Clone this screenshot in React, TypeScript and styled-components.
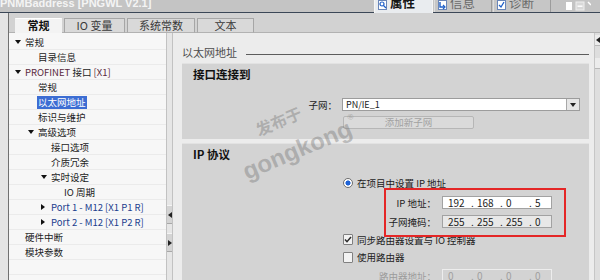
import React from "react";
import styled, { createGlobalStyle } from "styled-components";

const GlobalStyle = createGlobalStyle`
  html, body { margin: 0; padding: 0; }
  body {
    width: 600px;
    height: 280px;
    overflow: hidden;
    background: #ececec;
    font-family: "Noto Sans CJK SC", "Liberation Sans", sans-serif;
    font-size: 9.5px;
    color: #1c1c1c;
  }
`;

const Screen = styled.div`
  position: relative;
  width: 600px;
  height: 280px;
  display: flex;
  flex-direction: column;
  overflow: hidden;
`;

/* ---------- title bar ---------- */

const TitleBar = styled.div`
  height: 12px;
  flex: none;
  display: flex;
  align-items: flex-start;
  background: #c4c4c4;
  border-bottom: 1px solid #3b4757;
`;

const TitleText = styled.span`
  margin-top: -3px;
  font-family: "Liberation Sans", sans-serif;
  font-weight: 700;
  font-size: 11px;
  line-height: 12px;
  color: #f4f4f4;
  white-space: nowrap;
`;

const TitleRight = styled.div`
  margin-left: auto;
  display: flex;
  align-items: flex-start;
  align-self: stretch;
  padding-right: 9px;
`;

const TopTabs = styled.div`
  display: flex;
  gap: 1px;
  align-self: stretch;
`;

const TopTab = styled.div<{ $active?: boolean; $w: number }>`
  position: relative;
  width: ${(p) => p.$w}px;
  box-sizing: border-box;
  display: flex;
  align-items: flex-start;
  gap: 3px;
  padding-left: 3px;
  overflow: hidden;
  font-size: 12.5px;
  line-height: 12px;
  white-space: nowrap;
  background: ${(p) => (p.$active ? "#e9ecef" : "#c6c6c6")};
  color: ${(p) => (p.$active ? "#151515" : "#6a6a6a")};
  font-weight: ${(p) => (p.$active ? 700 : 400)};
  border-left: 1px solid ${(p) => (p.$active ? "#f6f6f6" : "#dedede")};
  border-right: 1px solid ${(p) => (p.$active ? "#f6f6f6" : "#9c9c9c")};
  margin-bottom: ${(p) => (p.$active ? "-1px" : "0")};
  span {
    margin-top: -3px;
  }
`;

const WinControls = styled.div`
  margin-left: 14px;
  width: 26px;
  height: 10px;
`;

/* ---------- frame ---------- */

const Frame = styled.div`
  flex: 1;
  min-height: 0;
  display: flex;
`;

const LeftStrip = styled.div`
  width: 8px;
  flex: none;
  background: #e4e4e4;
  border-right: 1px solid #707070;
`;

const Window = styled.div`
  flex: 1;
  min-width: 0;
  display: flex;
  flex-direction: column;
`;

const TabBand = styled.div`
  height: 19px;
  flex: none;
  display: flex;
  align-items: flex-end;
  gap: 2px;
  padding-left: 6px;
  background: #d2d2d2;
  border-bottom: 1px solid #b2b2b2;
`;

const PageTab = styled.div<{ $active?: boolean; $w: number }>`
  position: relative;
  width: ${(p) => p.$w}px;
  height: 15px;
  box-sizing: border-box;
  margin-bottom: -1px;
  display: flex;
  align-items: center;
  justify-content: center;
  font-size: 11px;
  line-height: 15px;
  font-weight: ${(p) => (p.$active ? 700 : 400)};
  color: ${(p) => (p.$active ? "#111" : "#3a3a3a")};
  background: ${(p) => (p.$active ? "#f3f3f3" : "#d9d9d9")};
  border: 1px solid ${(p) => (p.$active ? "#f3f3f3" : "#a6a6a6")};
  border-top-color: ${(p) => (p.$active ? "#ffffff" : "#a6a6a6")};
  border-bottom: ${(p) => (p.$active ? "1px solid #f3f3f3" : "1px solid #b2b2b2")};
`;

const Body = styled.div`
  flex: 1;
  min-height: 0;
  display: flex;
`;

/* ---------- tree ---------- */

const Tree = styled.div`
  width: 157px;
  flex: none;
  padding-top: 2px;
  background: #f7f7f7;
  overflow: hidden;
`;

const TreeRow = styled.div<{ $level: number }>`
  height: 15px;
  box-sizing: border-box;
  display: flex;
  align-items: center;
  padding-left: ${(p) => 6 + 13 * p.$level}px;
  border-bottom: 1px solid #ebebeb;
  white-space: nowrap;
  line-height: 13px;
`;

const CaretSlot = styled.span`
  width: 10px;
  flex: none;
  display: flex;
  align-items: center;
`;

const TreeLabel = styled.span<{ $selected?: boolean; $tone?: "port" | "plain" }>`
  padding: 0 1px;
  margin-left: -1px;
  background: ${(p) => (p.$selected ? "#3c6dd3" : "transparent")};
  color: ${(p) => (p.$selected ? "#ffffff" : p.$tone === "port" ? "#22408e" : "#1c1c1c")};
`;

const Maroon = styled.span`
  color: #5b2a40;
`;

const TreeScroll = styled.div`
  width: 5px;
  flex: none;
  display: flex;
  flex-direction: column;
  gap: 9px;
  padding-top: 172px;
  background: #e6e6e6;
  border-left: 1px solid #c2c2c2;
  border-right: 1px solid #c2c2c2;
`;

const ScrollNub = styled.div`
  height: 17px;
  display: flex;
  align-items: center;
  justify-content: center;
  background: #d4d4d4;
  border-top: 1px solid #f4f4f4;
  border-bottom: 1px solid #a8a8a8;
`;

/* ---------- main panel ---------- */

const Main = styled.div`
  flex: 1;
  min-width: 0;
  display: flex;
  background: #ececec;
`;

const Content = styled.div`
  flex: 1;
  min-width: 0;
  padding: 12px 5px 0 9px;
  overflow: hidden;
`;

const RightScroll = styled.div`
  width: 5px;
  flex: none;
  display: flex;
  flex-direction: column;
  gap: 12px;
  padding-top: 2px;
  background: #dedede;
  border-left: 1px solid #c6c6c6;
`;

const ScrollBtn = styled.div`
  height: 10px;
  display: flex;
  align-items: center;
  justify-content: center;
  background: #ececec;
  border-bottom: 1px solid #b8b8b8;
`;

const HeadingRow = styled.div`
  height: 14px;
  display: flex;
  align-items: center;
  gap: 9px;
`;

const Heading = styled.span`
  font-size: 11px;
  line-height: 14px;
  color: #4e4e4e;
  white-space: nowrap;
`;

const HeadingRule = styled.div`
  flex: 1;
  height: 1px;
  margin-top: 4px;
  background: #5c5c5c;
`;

const Section = styled.div`
  position: relative;
  margin-top: 4px;
  padding: 3px 0 10px 0;
  background: #d3d3d3;
  border-top: 1px solid #e2e2e2;
`;

const SectionTitle = styled.div`
  padding-left: 11px;
  font-size: 11.5px;
  line-height: 14px;
  font-weight: 700;
  color: #111;
`;

const SubnetRow = styled.div`
  margin-top: 17px;
  height: 13px;
  display: flex;
  align-items: center;
  gap: 5px;
`;

const FieldLabel = styled.span<{ $w: number; $disabled?: boolean }>`
  width: ${(p) => p.$w}px;
  flex: none;
  text-align: right;
  white-space: nowrap;
  color: ${(p) => (p.$disabled ? "#9b9b9b" : "#1c1c1c")};
`;

const Dropdown = styled.div`
  width: 238px;
  height: 13px;
  box-sizing: border-box;
  display: flex;
  align-items: center;
  background: #ffffff;
  border: 1px solid #9c9c9c;
  font-size: 9px;
`;

const DropValue = styled.span`
  flex: 1;
  padding-left: 3px;
  line-height: 11px;
`;

const DropBtn = styled.div`
  width: 12px;
  height: 11px;
  display: flex;
  align-items: center;
  justify-content: center;
  background: #e6e6e6;
  border-left: 1px solid #a8a8a8;
`;

const AddButton = styled.div`
  margin: 5px 0 0 161px;
  width: 131px;
  height: 13px;
  box-sizing: border-box;
  display: flex;
  align-items: center;
  justify-content: center;
  background: #dadada;
  border: 1px solid #b6b6b6;
  border-radius: 2px;
  color: #a2a2a2;
  line-height: 11px;
`;

const FormColumn = styled.div`
  margin: 15px 0 0 161px;
  display: flex;
  flex-direction: column;
  gap: 6px;
`;

const OptionRow = styled.div<{ $h: number }>`
  height: ${(p) => p.$h}px;
  display: flex;
  align-items: center;
  gap: 4px;
  white-space: nowrap;
  line-height: 12px;
`;

const Radio = styled.span`
  width: 10px;
  height: 10px;
  box-sizing: border-box;
  flex: none;
  border-radius: 50%;
  border: 1px solid #6e6e6e;
  background: radial-gradient(circle, #1f63d6 0 2.3px, #ffffff 2.8px);
`;

const Checkbox = styled.span`
  width: 10px;
  height: 11px;
  box-sizing: border-box;
  flex: none;
  display: flex;
  align-items: center;
  justify-content: center;
  background: #f2f2f2;
  border: 1px solid #808080;
  border-radius: 1px;
`;

const FieldRow = styled.div`
  height: 13px;
  display: flex;
  align-items: center;
  gap: 6px;
`;

const IpBox = styled.div<{ $tone: "edit" | "grey" | "off" }>`
  width: 110px;
  height: 13px;
  box-sizing: border-box;
  display: flex;
  align-items: center;
  padding-left: 5px;
  font-family: "Noto Sans CJK SC", "Liberation Sans", sans-serif;
  font-size: 10px;
  line-height: 11px;
  background: ${(p) => (p.$tone === "edit" ? "#ffffff" : p.$tone === "grey" ? "#e8e8e8" : "#d3d3d3")};
  border: 1px solid ${(p) => (p.$tone === "off" ? "#ededed" : "#a2a2a2")};
  color: ${(p) => (p.$tone === "off" ? "#a0a0a0" : "#1c1c1c")};
`;

const Octet = styled.span`
  width: 23px;
  flex: none;
`;

const Dot = styled.span`
  width: 6px;
  flex: none;
`;

const RedFrame = styled.div`
  position: absolute;
  left: 202px;
  top: 44px;
  width: 182px;
  height: 49px;
  box-sizing: border-box;
  border: 2px solid #e42626;
  pointer-events: none;
`;

/* ---------- watermark ---------- */

const Mark = styled.span<{ $size: number }>`
  position: absolute;
  transform-origin: 0 50%;
  transform: rotate(-23deg);
  font-family: "Liberation Sans", "Noto Sans CJK SC", sans-serif;
  font-size: ${(p) => p.$size}px;
  line-height: ${(p) => p.$size}px;
  font-weight: 700;
  color: rgba(110, 110, 110, 0.38);
  white-space: nowrap;
  pointer-events: none;
  sup {
    font-size: 8px;
    vertical-align: 15px;
    margin-left: 1px;
  }
`;

/* ---------- small drawings ---------- */

const CaretDown = () => (
  <svg width="6" height="4" viewBox="0 0 6 4">
    <path d="M0 0h6L3 4z" fill="#111" />
  </svg>
);

const CaretRight = () => (
  <svg width="4" height="6" viewBox="0 0 4 6">
    <path d="M0 0v6l4-3z" fill="#111" />
  </svg>
);

const Tri = ({ dir }: { dir: "l" | "r" | "d" | "u" }) => {
  const d = { l: "M4 0v6L0 3z", r: "M0 0v6l4-3z", d: "M0 0h6L3 4z", u: "M0 4h6L3 0z" }[dir];
  const w = dir === "l" || dir === "r" ? 4 : 6;
  const h = dir === "l" || dir === "r" ? 6 : 4;
  return (
    <svg width={w} height={h} viewBox={`0 0 ${w} ${h}`}>
      <path d={d} fill="#222" />
    </svg>
  );
};

const PropIcon = () => (
  <svg width="9" height="10" viewBox="0 0 9 10">
    <rect x="0.5" y="0.5" width="8" height="9" fill="#fff" stroke="#6a86b8" />
    <circle cx="4" cy="4" r="2" fill="none" stroke="#1e5fc8" strokeWidth="1.2" />
    <path d="M5.5 5.5L8 8" stroke="#1e5fc8" strokeWidth="1.3" />
  </svg>
);

const InfoIcon = () => (
  <svg width="9" height="10" viewBox="0 0 9 10">
    <rect x="0.5" y="0.5" width="8" height="9" fill="#fff" stroke="#6a86b8" />
    <path d="M2 2v5h4" fill="none" stroke="#1e5fc8" strokeWidth="1.4" />
    <path d="M5 5l2 2-2 2" fill="none" stroke="#1e5fc8" strokeWidth="1.2" />
  </svg>
);

const DiagIcon = () => (
  <svg width="9" height="10" viewBox="0 0 9 10">
    <rect x="0.5" y="0.5" width="8" height="9" fill="#fff" stroke="#6a86b8" />
    <path d="M2 5l2 2 3-5" fill="none" stroke="#1e5fc8" strokeWidth="1.3" />
  </svg>
);

const Tick = () => (
  <svg width="8" height="7" viewBox="0 0 8 7">
    <path d="M1 3.5l2 2.2L7 1" fill="none" stroke="#2a2a2a" strokeWidth="1.5" />
  </svg>
);

type Node = {
  label: React.ReactNode;
  level: number;
  caret?: "down" | "right";
  selected?: boolean;
  tone?: "port" | "plain";
};

const nodes: Node[] = [
  { label: "常规", level: 0, caret: "down" },
  { label: "目录信息", level: 1 },
  {
    label: (
      <>
        <Maroon>PROFINET</Maroon> 接口 <Maroon>[X1]</Maroon>
      </>
    ),
    level: 0,
    caret: "down",
  },
  { label: "常规", level: 1 },
  { label: "以太网地址", level: 1, selected: true },
  { label: "标识与维护", level: 1 },
  { label: "高级选项", level: 1, caret: "down" },
  { label: "接口选项", level: 2 },
  { label: "介质冗余", level: 2 },
  { label: "实时设定", level: 2, caret: "down" },
  { label: "IO 周期", level: 3 },
  { label: "Port 1 - M12 [X1 P1 R]", level: 2, caret: "right", tone: "port" },
  { label: "Port 2 - M12 [X1 P2 R]", level: 2, caret: "right", tone: "port" },
  { label: "硬件中断", level: 0 },
  { label: "模块参数", level: 0 },
  { label: "", level: 0 },
  { label: "", level: 0 },
];

const IpValue = ({ parts, tone }: { parts: string[]; tone: "edit" | "grey" | "off" }) => (
  <IpBox $tone={tone}>
    {parts.map((p, i) => (
      <React.Fragment key={i}>
        <Octet>{p}</Octet>
        {i < 3 && <Dot>.</Dot>}
      </React.Fragment>
    ))}
  </IpBox>
);

export default function App() {
  return (
    <Screen>
      <GlobalStyle />
      <TitleBar>
        <TitleText>PNMBaddress [PNGWL V2.1]</TitleText>
        <TitleRight>
          <TopTabs>
            <TopTab $active $w={59}>
              <PropIcon />
              <span>属性</span>
            </TopTab>
            <TopTab $w={58}>
              <InfoIcon />
              <span>信息</span>
            </TopTab>
            <TopTab $w={58}>
              <DiagIcon />
              <span>诊断</span>
            </TopTab>
          </TopTabs>
          <WinControls>
            <svg width="26" height="10" viewBox="0 0 26 10">
              <rect x="1" y="1" width="6" height="8" fill="#ffffff" />
              <rect x="11" y="1" width="8" height="8" fill="#d8d8d8" stroke="#eeeeee" />
              <rect x="12.5" y="4.5" width="5" height="1.4" fill="#ffffff" />
              <path d="M23 1l3 3" stroke="#ffffff" strokeWidth="1.4" />
            </svg>
          </WinControls>
        </TitleRight>
      </TitleBar>

      <Frame>
        <LeftStrip />
        <Window>
          <TabBand>
            <PageTab $active $w={47}>常规</PageTab>
            <PageTab $w={61}>IO 变量</PageTab>
            <PageTab $w={68}>系统常数</PageTab>
            <PageTab $w={57}>文本</PageTab>
          </TabBand>

          <Body>
            <Tree>
              {nodes.map((n, i) => (
                <TreeRow key={i} $level={n.level}>
                  <CaretSlot>
                    {n.caret === "down" && <CaretDown />}
                    {n.caret === "right" && <CaretRight />}
                  </CaretSlot>
                  <TreeLabel $selected={n.selected} $tone={n.tone}>
                    {n.label}
                  </TreeLabel>
                </TreeRow>
              ))}
            </Tree>
            <TreeScroll>
              <ScrollNub>
                <Tri dir="l" />
              </ScrollNub>
              <ScrollNub>
                <Tri dir="r" />
              </ScrollNub>
            </TreeScroll>

            <Main>
              <Content>
                <HeadingRow>
                  <Heading>以太网地址</Heading>
                  <HeadingRule />
                </HeadingRow>

                <Section>
                  <SectionTitle>接口连接到</SectionTitle>
                  <SubnetRow>
                    <FieldLabel $w={155}>子网：</FieldLabel>
                    <Dropdown>
                      <DropValue>PN/IE_1</DropValue>
                      <DropBtn>
                        <Tri dir="d" />
                      </DropBtn>
                    </Dropdown>
                  </SubnetRow>
                  <AddButton>添加新子网</AddButton>
                </Section>

                <Section>
                  <SectionTitle>IP 协议</SectionTitle>
                  <FormColumn>
                    <OptionRow $h={14}>
                      <Radio />
                      <span>在项目中设置 IP 地址</span>
                    </OptionRow>
                    <FieldRow>
                      <FieldLabel $w={93}>IP 地址：</FieldLabel>
                      <IpValue parts={["192", "168", "0", "5"]} tone="edit" />
                    </FieldRow>
                    <FieldRow>
                      <FieldLabel $w={93}>子网掩码：</FieldLabel>
                      <IpValue parts={["255", "255", "255", "0"]} tone="grey" />
                    </FieldRow>
                    <OptionRow $h={11}>
                      <Checkbox>
                        <Tick />
                      </Checkbox>
                      <span>同步路由器设置与 IO 控制器</span>
                    </OptionRow>
                    <OptionRow $h={12}>
                      <Checkbox />
                      <span>使用路由器</span>
                    </OptionRow>
                    <FieldRow>
                      <FieldLabel $w={93} $disabled>
                        路由器地址：
                      </FieldLabel>
                      <IpValue parts={["0", "0", "0", "0"]} tone="off" />
                    </FieldRow>
                  </FormColumn>
                  <RedFrame />
                </Section>
              </Content>
              <RightScroll>
                <ScrollBtn>
                  <Tri dir="l" />
                </ScrollBtn>
                <ScrollBtn />
              </RightScroll>
            </Main>
          </Body>
        </Window>
      </Frame>

      <Mark $size={16} style={{ left: 257, top: 124 }}>
        发布于
      </Mark>
      <Mark $size={24} style={{ left: 242, top: 152 }}>
        gongkong<sup>®</sup>
      </Mark>
    </Screen>
  );
}
